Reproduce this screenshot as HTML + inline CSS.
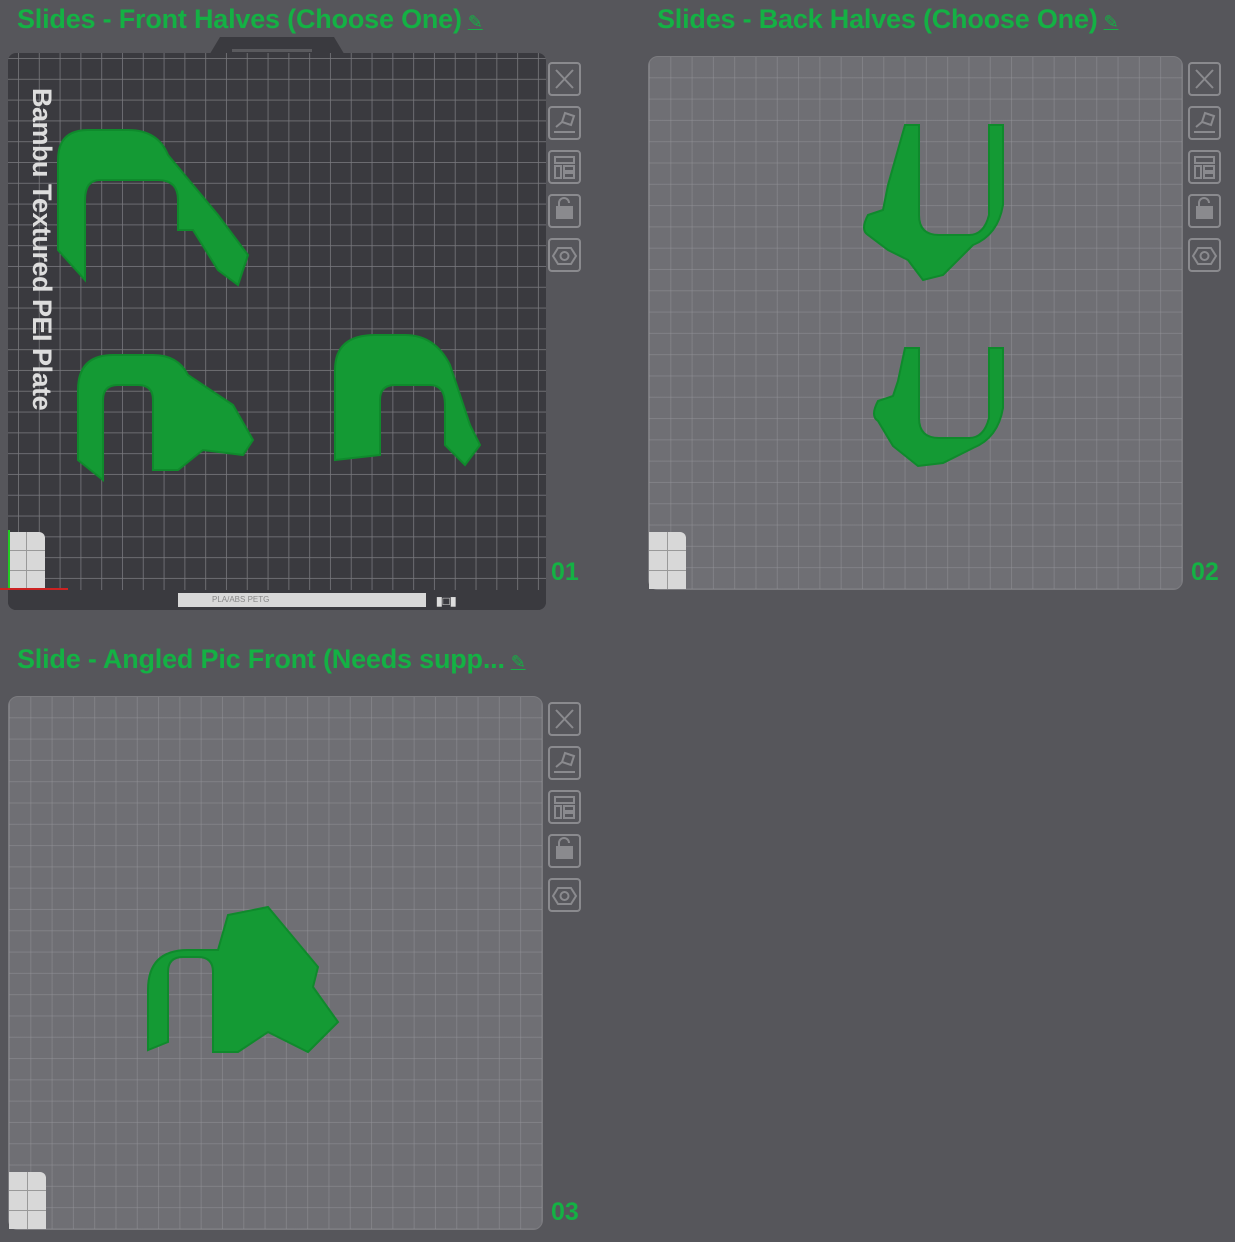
<!DOCTYPE html>
<html><head><meta charset="utf-8"><style>
*{margin:0;padding:0;box-sizing:border-box}
body{width:1235px;height:1242px;background:#56565b;position:relative;overflow:hidden;font-family:"Liberation Sans",sans-serif}
.t{position:absolute;color:#14b144;font-size:27px;letter-spacing:-0.2px;white-space:nowrap;font-weight:bold}
.t span{font-size:18px;text-decoration:underline;margin-left:6px;font-weight:normal}
.pl{position:absolute;border-radius:10px;overflow:hidden}
.light{background-color:#6f6f74;background-image:
 linear-gradient(90deg,rgba(150,150,155,.45) 1px,transparent 1px),
 linear-gradient(0deg,rgba(150,150,155,.45) 1px,transparent 1px);
 background-size:21.3px 21.3px;border:1px solid #7c7c80}
.dark{background-color:#3a3a3f;background-image:
 linear-gradient(90deg,rgba(120,120,125,.8) 1px,transparent 1px),
 linear-gradient(0deg,rgba(120,120,125,.8) 1px,transparent 1px);
 background-size:20.8px 20.8px;background-position:10px 6px}
.num{position:absolute;color:#14b144;font-size:25px;font-weight:bold}
.corner{position:absolute;width:37px;height:57px;background:#d8d8d8;border-radius:0 6px 0 0;
 background-image:linear-gradient(90deg,transparent 18px,#999 18px,#999 19px,transparent 19px),linear-gradient(0deg,transparent 18px,#999 18px,#999 19px,transparent 19px,transparent 38px,#999 38px,#999 39px,transparent 39px)}
</style></head><body>
<div class="t" style="left:17px;top:4px">Slides - Front Halves (Choose One)<span>✎</span></div>
<div class="t" style="left:657px;top:4px">Slides - Back Halves (Choose One)<span>✎</span></div>
<div class="t" style="left:17px;top:644px">Slide - Angled Pic Front (Needs supp...<span>✎</span></div>

<div style="position:absolute;left:202px;top:37px;width:150px;height:30px;background:#3a3a3f;clip-path:polygon(12% 0,88% 0,100% 100%,0 100%)"></div>
<div style="position:absolute;left:232px;top:49px;width:80px;height:3px;background:#5a5a5e"></div>
<div class="pl dark" style="left:8px;top:53px;width:538px;height:557px;border-radius:8px"></div>
<div style="position:absolute;left:8px;top:590px;width:538px;height:20px;background:#3a3a3f;border-radius:0 0 8px 8px"></div>
<div style="position:absolute;left:178px;top:593px;width:248px;height:14px;background:#d8d8d8;font-size:8px;color:#888;padding:2px 0 0 34px">PLA/ABS PETG</div>
<div style="position:absolute;left:436px;top:594px;color:#ddd;font-size:12px;font-weight:bold">▮□▮</div>
<div class="corner" style="left:8px;top:532px"></div>
<div style="position:absolute;left:0;top:588px;width:68px;height:2px;background:#c22"></div>
<div style="position:absolute;left:8px;top:530px;width:2px;height:58px;background:#2c2"></div>
<div style="position:absolute;left:26px;top:88px;color:#ddd;font-size:27px;font-weight:bold;writing-mode:vertical-rl;letter-spacing:-0.5px">Bambu Textured PEI Plate</div>

<div class="pl light" style="left:648px;top:56px;width:535px;height:534px"></div>
<div class="corner" style="left:649px;top:532px"></div>
<div class="pl light" style="left:8px;top:696px;width:535px;height:534px"></div>
<div class="corner" style="left:9px;top:1172px"></div>

<div class="num" style="left:551px;top:558px">01</div>
<div class="num" style="left:1191px;top:558px">02</div>
<div class="num" style="left:551px;top:1198px">03</div>

<svg width="1235" height="1242" style="position:absolute;left:0;top:0">
<defs><g id="icons" fill="none" stroke="#8a8a8e" stroke-width="2">
<rect x="1" y="1" width="31" height="32" rx="3"/><path d="M8 8L25 26M25 8L8 26"/>
<rect x="1" y="45" width="31" height="32" rx="3"/><path d="M17 51l9 3-3 9-9-3zM6 70h21M8 65l6-5"/>
<rect x="1" y="89" width="31" height="32" rx="3"/><rect x="7" y="95" width="19" height="6"/><rect x="7" y="104" width="6" height="12"/><rect x="16" y="104" width="10" height="5"/><rect x="16" y="111" width="10" height="5"/>
<rect x="1" y="133" width="31" height="32" rx="3"/><rect x="9" y="145" width="15" height="11" fill="#8a8a8e"/><path d="M11 145v-4a5 5 0 0 1 10 0"/>
<rect x="1" y="177" width="31" height="32" rx="3"/><path d="M10 186h13l5 8-5 8H10l-5-8z"/><circle cx="16.5" cy="194" r="4"/>
</g></defs>
<use href="#icons" x="548" y="62"/><use href="#icons" x="1188" y="62"/><use href="#icons" x="548" y="702"/>
<g fill="#149a34" stroke="#0f8a2c" stroke-width="2">
<path d="M58 250V160q0-30 30-30h40q30 0 40 25l50 60 30 40-10 30-20-15-25-40-15 0V200q0-20-20-20H100q-15 0-15 20v80z"/>
<path d="M78 460V390q0-35 35-35h40q25 0 35 20l45 30 20 35-10 15-40-5-25 20h-25V400q0-15-15-15h-20q-15 0-15 15v80z"/>
<path d="M335 460V370q0-35 40-35h30q30 0 45 30l20 60 10 20-15 20-20-20v-40q0-20-15-20h-35q-15 0-15 15v55z"/>
<path d="M905 125h14v90q0 20 20 20h30q15 0 20-20v-90h14v80q-5 30-30 40l-30 30-20 5-15-20-20-10-20-15q-8-5 0-20l15-5 5-25z"/>
<path d="M905 348h14v70q0 20 20 20h30q15 0 20-20v-70h14v60q-5 30-30 40l-30 15-25 3-25-20-15-25q-8-5 0-20l15-5 5-15z"/>
<path d="M148 1050V990q0-40 40-40h30l10-35 40-8 25 30 25 30-5 20 25 35-30 30-40-20-30 20h-25v-80q0-15-15-15h-15q-15 0-15 15v70z"/>
</g>
</svg>
</body></html>
